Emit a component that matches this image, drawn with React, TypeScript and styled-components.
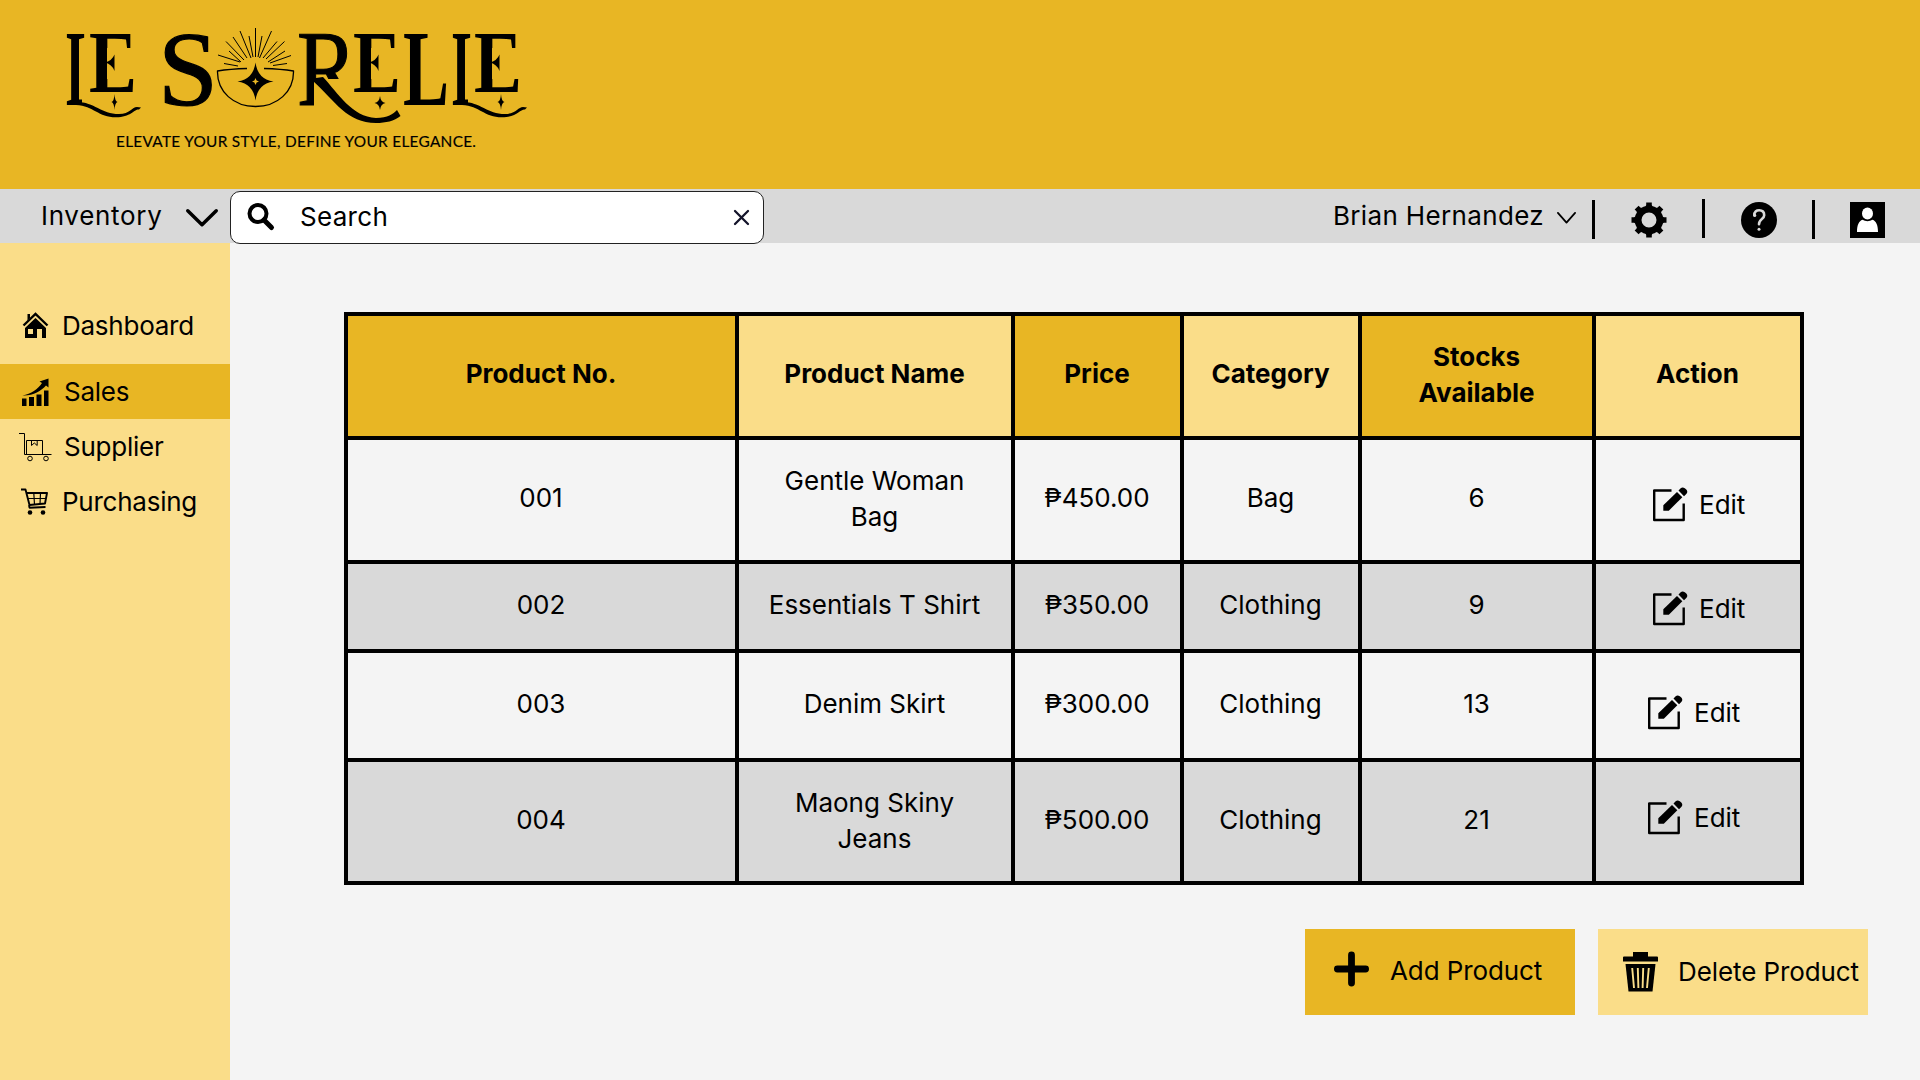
import React from "react";
import styled, { createGlobalStyle } from "styled-components";

const gold = "#e8b624";
const cream = "#fadd89";
const grey = "#d9d9d9";
const paper = "#f4f4f4";

const GlobalStyle = createGlobalStyle`
  * { box-sizing: border-box; }
  body { margin: 0; background: ${paper}; }
  svg { display: block; flex: none; overflow: visible; }
`;

const Page = styled.div`
  display: flex;
  flex-direction: column;
  width: 1920px;
  height: 1080px;
  overflow: hidden;
  background: ${paper};
  color: #000;
  font-family: Inter, "Liberation Sans", sans-serif;
  font-size: 26px;
  font-weight: 382;
  line-height: 36px;
`;

const Header = styled.header`
  height: 189px;
  flex: none;
  background: ${gold};
`;

const TopBar = styled.div`
  display: flex;
  height: 54px;
  flex: none;
  background: ${grey};
`;

const SectionPicker = styled.div`
  display: flex;
  align-items: flex-start;
  justify-content: space-between;
  width: 230px;
  padding: 9px 12px 0 41px;
  letter-spacing: 0.7px;
`;

const SearchBox = styled.div`
  display: flex;
  align-items: center;
  width: 534px;
  height: 53px;
  margin-top: 2px;
  padding: 0 14px 1px 16px;
  border: 1px solid #222;
  border-radius: 10px;
  background: #fff;
`;

const SearchText = styled.span`
  flex: 1;
  padding-left: 25px;
  letter-spacing: 0.3px;
`;

const UserTools = styled.div`
  display: flex;
  align-items: flex-start;
  margin-left: auto;
  padding-right: 35px;
`;

const UserName = styled.div`
  display: flex;
  gap: 13px;
  padding-top: 9px;
  margin-right: 16px;
  letter-spacing: 0.35px;
`;

const Divider = styled.span<{ $top: number }>`
  width: 3px;
  height: 39px;
  margin-top: ${(p) => p.$top}px;
  background: #000;
`;

const Tool = styled.span`
  display: flex;
  justify-content: center;
  width: 107px;
  padding-top: 13px;
  &:last-child { width: 36px; margin-left: 34px; }
`;

const Nudge = styled.span<{ $y: number }>`
  display: block;
  padding-top: ${(p) => p.$y}px;
`;

const Body = styled.div`
  display: flex;
  flex: 1;
`;

const Sidebar = styled.nav`
  display: flex;
  flex-direction: column;
  width: 230px;
  padding-top: 55px;
  background: ${cream};
  letter-spacing: -0.25px;
`;

const NavItem = styled.a<{ $active?: boolean; $after?: number; $left: number }>`
  display: flex;
  align-items: center;
  height: 55px;
  margin-bottom: ${(p) => p.$after ?? 0}px;
  padding-left: ${(p) => p.$left}px;
  background: ${(p) => (p.$active ? gold : "transparent")};
`;

const NavIcon = styled.span<{ $w: number }>`
  display: flex;
  width: ${(p) => p.$w}px;
`;

const Main = styled.main`
  display: flex;
  flex-direction: column;
  flex: 1;
  padding: 69px 52px 0 114px;
`;

const Table = styled.div`
  display: grid;
  grid-template-columns: 387px 272px 165px 174px 230px 204px;
  grid-template-rows: 120px 120px 85px 105px 119px;
  gap: 4px;
  width: 1460px;
  padding: 4px;
  background: #000;
`;

const HeadCell = styled.div<{ $light?: boolean; $double?: boolean }>`
  display: flex;
  align-items: center;
  justify-content: center;
  padding: 0 31px ${(p) => (p.$double ? 3 : 5)}px 30px;
  text-align: center;
  font-weight: 700;
  background: ${(p) => (p.$light ? cream : gold)};
`;

const Cell = styled.div<{ $shaded: boolean; $double?: boolean }>`
  display: flex;
  align-items: center;
  justify-content: center;
  padding: 0 1px ${(p) => (p.$double ? 2 : 4)}px 0;
  text-align: center;
  white-space: pre-line;
  background: ${(p) => (p.$shaded ? grey : paper)};
`;

const ActionCell = styled(Cell)<{ $top: number; $left: number }>`
  align-items: flex-start;
  justify-content: flex-start;
  gap: 11px;
  padding: ${(p) => p.$top}px 0 0 ${(p) => p.$left}px;
`;

const Actions = styled.div`
  display: flex;
  justify-content: flex-end;
  gap: 23px;
  margin-top: 44px;
`;

const Button = styled.div<{ $light?: boolean }>`
  display: flex;
  width: 270px;
  height: 86px;
  padding: ${(p) => (p.$light ? "23px 0 0 25px" : "22px 0 0 29px")};
  gap: ${(p) => (p.$light ? 20 : 21)}px;
  letter-spacing: -0.1px;
  white-space: nowrap;
  background: ${(p) => (p.$light ? cream : gold)};
`;

const Lettering = styled.text<{ $thin?: boolean }>`
  font-family: "Liberation Serif", serif;
  font-weight: ${(p) => (p.$thin ? 400 : 700)};
  stroke: #000;
  stroke-width: ${(p) => (p.$thin ? 1.2 : 0)}px;
`;

const Tagline = styled.text`
  font-family: Lato, "Liberation Sans", sans-serif;
  font-size: 15.4px;
  font-weight: 400;
  stroke: #000;
  stroke-width: 0.15px;
`;

function Star({ x, y, w, h }: { x: number; y: number; w: number; h: number }) {
  const k = 0.12;
  return (
    <path
      d={`M${x} ${y - h} Q${x + w * k} ${y - h * k} ${x + w} ${y} Q${x + w * k} ${y + h * k} ${x} ${y + h} Q${x - w * k} ${y + h * k} ${x - w} ${y} Q${x - w * k} ${y - h * k} ${x} ${y - h}Z`}
    />
  );
}

const burst: [number, number, number, number][] = [
  [255.5, 57, 255.5, 28], [251, 58, 240, 31], [259.5, 58, 271.5, 31],
  [253, 57, 249, 36], [258, 57, 262, 36], [247, 58, 233, 37], [263, 58, 277, 41.5],
  [244, 60, 226, 41.5], [266, 59, 284.5, 41.5], [241, 62, 229, 51], [268, 62, 285, 51],
  [240, 62, 218, 55], [270, 63, 291, 55.5], [238, 66, 224, 63.5], [273, 65.5, 287, 63.5],
];

function Logo() {
  const es = [89, 353, 474];
  return (
    <svg width="560" height="189" viewBox="0 0 560 189">
      <defs>
        <clipPath id="stem1"><path d="M60 20H88V50H82V110H60Z" /></clipPath>
        <clipPath id="stem2"><path d="M446 20H474V50H468V110H446Z" /></clipPath>
        <clipPath id="bowl"><path d="M290 20H370V79H314V110H290Z" /></clipPath>
        {es.map((x) => (
          <clipPath id={`arm${x}`} key={x}>
            <path d={`M${x - 4} 20H${x + 60}V48H${x + 18}V79H${x + 60}V100H${x - 4}Z`} />
          </clipPath>
        ))}
      </defs>
      <g clipPath="url(#stem1)">
        <Lettering x="66" y="105" fontSize="107" textLength="34" lengthAdjust="spacingAndGlyphs">L</Lettering>
      </g>
      <Lettering $thin x="158" y="105" fontSize="106" textLength="60" lengthAdjust="spacingAndGlyphs">S</Lettering>
      <g clipPath="url(#bowl)">
        <Lettering $thin x="297" y="105" fontSize="107" textLength="60" lengthAdjust="spacingAndGlyphs">R</Lettering>
      </g>
      <Lettering x="403" y="105" fontSize="107" textLength="46" lengthAdjust="spacingAndGlyphs">L</Lettering>
      <g clipPath="url(#stem2)">
        <Lettering x="452" y="105" fontSize="107" textLength="34" lengthAdjust="spacingAndGlyphs">L</Lettering>
      </g>
      {es.map((x) => (
        <g key={x}>
          <g clipPath={`url(#arm${x})`}>
            <Lettering x={x} y="92" fontSize="88" textLength="48" lengthAdjust="spacingAndGlyphs">E</Lettering>
          </g>
          <path d={`M${x + 25.5} 54.500 Q${x + 23} 61 ${x + 15.5} 62.500 Q${x + 23} 64 ${x + 25.5} 71Z`} />
        </g>
      ))}
      {[0, 386].map((dx) => (
        <path key={dx} transform={`translate(${dx} 0)`} d="M76 102C94 101.500 101 114 119 114C130 114 132 107 137 107L141 107.500L139 109.500C134 109 131 117.300 116 117.300C98 117.300 94 106 76 105Z" />
      ))}
      <path d="M309 79L323 77C338 93 352 117 376 118C388 118 393 114 397 110L400.500 116C394 121 386 123 376 123C347 123 335 101 313 81Z" />
      <Star x={114.500} y={102} w={3} h={8} />
      <Star x={380} y={103} w={5.500} h={7} />
      <Star x={501} y={102} w={3.500} h={8} />
      <g fill="none" stroke="#000" strokeWidth="1">
        {burst.map(([a, b, c, d], i) => <path key={i} d={`M${a} ${b}L${c} ${d}`} />)}
      </g>
      <path fill="none" stroke="#000" strokeWidth="1.300" d="M247 68.500Q230 69 217.500 71C217 92 234 106.500 255.500 106.500S294 92 293.500 71Q281 69 264 68.500" />
      <Star x={255.500} y={81.500} w={18} h={19} />
      <path d="M255.500 74.500L258 79L262.500 81.500L258 84L255.500 88.500L253 84L248.500 81.500L253 79Z" />
      <path fill={gold} d="M255.500 78L256.600 80.400L259 81.500L256.600 82.600L255.500 85L254.400 82.600L252 81.500L254.400 80.400Z" />
      <Tagline x="116" y="146.500" textLength="360">ELEVATE YOUR STYLE, DEFINE YOUR ELEGANCE.</Tagline>
    </svg>
  );
}

function Chevron({ w, h, s }: { w: number; h: number; s: number }) {
  return (
    <svg width={w} height={h} fill="none" stroke="#000" strokeWidth={s} strokeLinecap="round" strokeLinejoin="round">
      <path d={`M${s / 2} ${s / 2}L${w / 2} ${h - s / 2 - 0.5}L${w - s / 2} ${s / 2}`} />
    </svg>
  );
}

const SearchIcon = () => (
  <svg width="28" height="28" fill="none" stroke="#000">
    <circle cx="11" cy="10.500" r="8.500" strokeWidth="4" />
    <path d="M17 17L24.500 24.500" strokeWidth="5" strokeLinecap="round" />
  </svg>
);

const ClearIcon = () => (
  <svg width="15" height="15" fill="none" stroke="#14142b" strokeWidth="2.300" strokeLinecap="round">
    <path d="M1 1L14 14M14 1L1 14" />
  </svg>
);

const GearIcon = () => (
  <svg width="36" height="36" viewBox="-18 -18 36 36">
    {[0, 45, 90, 135, 180, 225, 270, 315].map((a) => (
      <path key={a} transform={`rotate(${a})`} d="M-4.500 -11L-2.800 -15V-17.500H2.800V-15L4.500 -11Z" />
    ))}
    <circle r="10.900" fill="none" stroke="#000" strokeWidth="6.800" />
  </svg>
);

const HelpIcon = () => (
  <svg width="36" height="36" viewBox="0 0 36 36">
    <circle cx="18" cy="18" r="18" />
    <path d="M13.300 13.500C13 9.500 15.500 8.300 18.200 8.300C21.500 8.300 23.200 10.500 23.200 13.200C23.200 17.500 18 16.500 18 22.300" fill="none" stroke={grey} strokeWidth="2.600" strokeLinecap="round" />
    <circle cx="13.900" cy="13.500" r="1.400" fill={grey} />
    <circle cx="18" cy="27.300" r="1.500" fill={grey} />
  </svg>
);

const UserIcon = () => (
  <svg width="35" height="36" viewBox="0 0 35 36">
    <rect width="35" height="36" />
    <ellipse cx="17.500" cy="11.500" rx="5.500" ry="6" fill="#fff" />
    <path d="M7 30C7 23 9 19 12.500 17.800C15.500 19.600 19.500 19.600 22.500 17.800C26 19 28 23 28 30Z" fill="#fff" />
  </svg>
);

const HomeIcon = () => (
  <svg width="26" height="27" viewBox="0 0 26 27">
    <path d="M0.500 13.500L12.500 2L24.500 13.500" fill="none" stroke="#000" strokeWidth="2.400" />
    <path d="M4.500 2H7V6L4.500 8.500Z" />
    <path fillRule="evenodd" d="M12.500 6L23 16V26H19V17H14V26H2V16ZM5 17V22H10V17Z" />
  </svg>
);

const SalesIcon = () => (
  <svg width="27" height="28" viewBox="0 0 27 28">
    <path d="M0 20.500H4.500V28H0ZM7 19H12V28H7ZM14.500 16.500H19.500V28H14.500ZM22 12.500H26.500V28H22Z" />
    <path d="M0.500 17.500C9 16 16 11 20 5L17.500 3.500L26.500 0.500V9.500L24 7.500C19 13 11 18 0.500 17.500Z" />
  </svg>
);

const SupplierIcon = () => (
  <svg width="33" height="28" viewBox="0 0 33 28" fill="none" stroke="#000" strokeWidth="1">
    <path d="M0 0.500H5.500V21.500H32.500M7.500 21V7.500H23.500V21M12.500 7.500V12.500L15.300 10L18.200 12.500V7.500" />
    <circle cx="11" cy="25.500" r="2.300" />
    <circle cx="27" cy="25.500" r="2.300" />
  </svg>
);

const CartIcon = () => (
  <svg width="27" height="27" viewBox="0 0 27 27">
    <g fill="none" stroke="#000" strokeLinejoin="round">
      <path d="M0 1.500H4.500L8.500 17L24 15.500L26 5H6M24.500 19L8.500 19.700L8 17" strokeWidth="1.900" />
      <path d="M7 10.500H25M12.800 5L13.500 16.500M19.500 5L19 16" strokeWidth="1.200" />
    </g>
    <circle cx="9" cy="24.500" r="2.300" />
    <circle cx="22" cy="24.500" r="2.300" />
  </svg>
);

const EditIcon = () => (
  <svg width="35" height="35" viewBox="0 0 35 35">
    <path d="M18.500 3.500H1.200V33H30.700V16.500" fill="none" stroke="#000" strokeWidth="2.400" strokeLinejoin="round" />
    <path d="M10.300 23.700V18.300L24 5L29.300 10.300L15.800 23.700Z" />
    <path d="M25.500 3.500L27.700 1.300C30.500 -1.500 36.500 4 33.500 6.700L31 9.200Z" />
  </svg>
);

const PlusIcon = () => (
  <svg width="35" height="35" fill="none" stroke="#000" strokeWidth="6.800" strokeLinecap="round">
    <path d="M17.500 3.900V32.100M3.400 18H31.600" />
  </svg>
);

const TrashIcon = () => (
  <svg width="35" height="40" viewBox="0 0 35 40">
    <path d="M0 5.500Q0 4.500 1 4.500H10V0H25V4.500H34Q35 4.500 35 5.500V9.500H0Z" />
    <path d="M2.500 12H32.500L29.500 39.500H5.500Z" />
    <path d="M9.200 16L11 36M14.800 16L15.400 36M20.200 16L19.600 36M25.800 16L24 36" stroke={cream} strokeWidth="1.900" />
  </svg>
);

const rows = [
  { no: "001", name: "Gentle Woman\nBag", price: "₱450.00", cat: "Bag", stock: 6, top: 47, left: 57 },
  { no: "002", name: "Essentials T Shirt", price: "₱350.00", cat: "Clothing", stock: 9, top: 27, left: 57 },
  { no: "003", name: "Denim Skirt", price: "₱300.00", cat: "Clothing", stock: 13, top: 42, left: 52 },
  { no: "004", name: "Maong Skiny\nJeans", price: "₱500.00", cat: "Clothing", stock: 21, top: 38, left: 52 },
];

export default function App() {
  return (
    <Page>
      <GlobalStyle />
      <Header><Logo /></Header>
      <TopBar>
        <SectionPicker>
          Inventory
          <Nudge $y={11}><Chevron w={32} h={18} s={3.5} /></Nudge>
        </SectionPicker>
        <SearchBox>
          <SearchIcon />
          <SearchText>Search</SearchText>
          <ClearIcon />
        </SearchBox>
        <UserTools>
          <UserName>
            Brian Hernandez
            <Nudge $y={14}><Chevron w={19} h={12} s={1.8} /></Nudge>
          </UserName>
          <Divider $top={11} />
          <Tool><GearIcon /></Tool>
          <Divider $top={10} />
          <Tool><HelpIcon /></Tool>
          <Divider $top={11} />
          <Tool><UserIcon /></Tool>
        </UserTools>
      </TopBar>
      <Body>
        <Sidebar>
          <NavItem $left={23} $after={11}><NavIcon $w={39}><HomeIcon /></NavIcon>Dashboard</NavItem>
          <NavItem $left={22} $active><NavIcon $w={42}><SalesIcon /></NavIcon>Sales</NavItem>
          <NavItem $left={19}><NavIcon $w={45}><SupplierIcon /></NavIcon>Supplier</NavItem>
          <NavItem $left={21}><NavIcon $w={41}><CartIcon /></NavIcon>Purchasing</NavItem>
        </Sidebar>
        <Main>
          <Table>
            <HeadCell>Product No.</HeadCell>
            <HeadCell $light>Product Name</HeadCell>
            <HeadCell>Price</HeadCell>
            <HeadCell $light>Category</HeadCell>
            <HeadCell $double>Stocks Available</HeadCell>
            <HeadCell $light>Action</HeadCell>
            {rows.map((r, i) => {
              const shaded = i % 2 === 1;
              return (
                <React.Fragment key={r.no}>
                  <Cell $shaded={shaded}>{r.no}</Cell>
                  <Cell $shaded={shaded} $double={r.name.includes("\n")}>{r.name}</Cell>
                  <Cell $shaded={shaded}>{r.price}</Cell>
                  <Cell $shaded={shaded}>{r.cat}</Cell>
                  <Cell $shaded={shaded}>{r.stock}</Cell>
                  <ActionCell $shaded={shaded} $top={r.top} $left={r.left}>
                    <EditIcon />
                    Edit
                  </ActionCell>
                </React.Fragment>
              );
            })}
          </Table>
          <Actions>
            <Button><PlusIcon /><Nudge $y={2}>Add Product</Nudge></Button>
            <Button $light><TrashIcon /><Nudge $y={2}>Delete Product</Nudge></Button>
          </Actions>
        </Main>
      </Body>
    </Page>
  );
}
